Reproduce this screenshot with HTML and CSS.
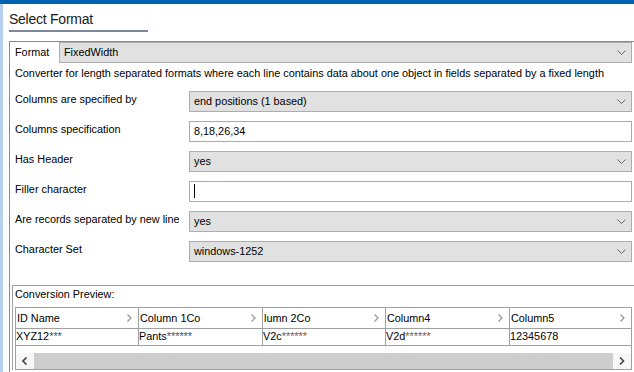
FILE: index.html
```html
<!DOCTYPE html>
<html>
<head>
<meta charset="utf-8">
<link rel="stylesheet" href="styles.css">
</head>
<body>
<div class="topbar"></div>
<div class="shell">
  <div class="strip"></div>
  <div class="content">
    <div class="title-wrap"><div class="title">Select Format</div></div>
    <div class="group">
      <div class="format-row">
        <span class="format-label">Format</span>
        <div class="select format-select"><span class="val">FixedWidth</span><svg class="chev" width="9" height="5" viewBox="0 0 9 5"><polyline points="0.5,0.5 4.5,4.5 8.5,0.5" fill="none" stroke="#666" stroke-width="1"/></svg></div>
      </div>
      <p class="desc">Converter for length separated formats where each line contains data about one object in fields separated by a fixed length</p>
      <div class="rows">
        <div class="row"><span class="label">Columns are specified by</span><div class="select"><span class="val">end positions (1 based)</span><svg class="chev" width="9" height="5" viewBox="0 0 9 5"><polyline points="0.5,0.5 4.5,4.5 8.5,0.5" fill="none" stroke="#666" stroke-width="1"/></svg></div></div>
        <div class="row"><span class="label">Columns specification</span><div class="input"><span class="val">8,18,26,34</span></div></div>
        <div class="row"><span class="label">Has Header</span><div class="select"><span class="val">yes</span><svg class="chev" width="9" height="5" viewBox="0 0 9 5"><polyline points="0.5,0.5 4.5,4.5 8.5,0.5" fill="none" stroke="#666" stroke-width="1"/></svg></div></div>
        <div class="row"><span class="label">Filler character</span><div class="input"><span class="caret"></span></div></div>
        <div class="row"><span class="label">Are records separated by new line</span><div class="select"><span class="val">yes</span><svg class="chev" width="9" height="5" viewBox="0 0 9 5"><polyline points="0.5,0.5 4.5,4.5 8.5,0.5" fill="none" stroke="#666" stroke-width="1"/></svg></div></div>
        <div class="row"><span class="label">Character Set</span><div class="select"><span class="val">windows-1252</span><svg class="chev" width="9" height="5" viewBox="0 0 9 5"><polyline points="0.5,0.5 4.5,4.5 8.5,0.5" fill="none" stroke="#666" stroke-width="1"/></svg></div></div>
      </div>
      <div class="preview">
        <div class="preview-title">Conversion Preview:</div>
        <div class="table">
          <div class="grid">
            <div class="hcell"><span>ID Name</span><svg class="hchev" width="5" height="8" viewBox="0 0 5 8"><polyline points="0.5,0.5 4,4 0.5,7.5" fill="none" stroke="#999" stroke-width="1.3"/></svg></div>
            <div class="hcell"><span>Column 1Co</span><svg class="hchev" width="5" height="8" viewBox="0 0 5 8"><polyline points="0.5,0.5 4,4 0.5,7.5" fill="none" stroke="#999" stroke-width="1.3"/></svg></div>
            <div class="hcell"><span>lumn 2Co</span><svg class="hchev" width="5" height="8" viewBox="0 0 5 8"><polyline points="0.5,0.5 4,4 0.5,7.5" fill="none" stroke="#999" stroke-width="1.3"/></svg></div>
            <div class="hcell"><span>Column4</span><svg class="hchev" width="5" height="8" viewBox="0 0 5 8"><polyline points="0.5,0.5 4,4 0.5,7.5" fill="none" stroke="#999" stroke-width="1.3"/></svg></div>
            <div class="hcell last"><span>Column5</span><svg class="hchev" width="5" height="8" viewBox="0 0 5 8"><polyline points="0.5,0.5 4,4 0.5,7.5" fill="none" stroke="#999" stroke-width="1.3"/></svg></div>
            <div class="dcell">XYZ12<span class="fill">***</span></div>
            <div class="dcell">Pants<span class="fill">******</span></div>
            <div class="dcell">V2c<span class="fill alt">******</span></div>
            <div class="dcell">V2d<span class="fill alt">******</span></div>
            <div class="dcell last">12345678</div>
          </div>
          <div class="spacer"></div>
          <div class="hscroll">
            <div class="arrow"><svg width="6" height="8" viewBox="0 0 6 8"><polyline points="4.5,0.5 1,4 4.5,7.5" fill="none" stroke="#444" stroke-width="1.6"/></svg></div>
            <div class="track"></div>
            <div class="arrow"><svg width="6" height="8" viewBox="0 0 6 8"><polyline points="1,0.5 4.5,4 1,7.5" fill="none" stroke="#444" stroke-width="1.6"/></svg></div>
          </div>
        </div>
      </div>
    </div>
  </div>
</div>
</body>
</html>
```

FILE: styles.css
```css
html, body {
  margin: 0;
  padding: 0;
  background: #ffffff;
  overflow: hidden;
}
body {
  width: 634px;
  height: 372px;
  font-family: "Liberation Sans", Arial, sans-serif;
  font-size: 10.85px;
  color: #000;
}
.topbar {
  height: 4px;
  background: #0063b1;
}
.shell {
  display: flex;
  height: 368px;
}
.strip {
  width: 3px;
  background: #b6d0ec;
  flex: none;
}
.content {
  flex: 1;
  padding-left: 6px;
  min-width: 0;
}
.title-wrap {
  padding-top: 7px;
}
.title {
  width: 139px;
  font-size: 14px;
  letter-spacing: -0.25px;
  line-height: 16px;
  color: #1a1a1a;
  padding-bottom: 3px;
  border-bottom: 2px solid #7b8798;
}
.group {
  margin-top: 9px;
  border-top: 1px solid #8a8a8a;
  border-left: 1px solid #8a8a8a;
  padding-left: 5px;
  padding-right: 2px;
  height: 340px;
}
.format-row {
  display: flex;
  align-items: center;
  height: 21px;
}
.format-label {
  width: 44px;
  flex: none;
  line-height: 13px;
}
.select, .input {
  flex: 1;
  height: 21px;
  box-sizing: border-box;
  display: flex;
  align-items: flex-start;
  padding-left: 4px;
  padding-right: 5px;
  min-width: 0;
}
.select {
  background: #e1e1e1;
  border: 1px solid #adadad;
}
.input {
  background: #fff;
  border: 1px solid #ababab;
}
.val {
  flex: 1;
  line-height: 17px;
  padding-top: 1px;
  white-space: nowrap;
}
.chev {
  margin-top: 7px;
  flex: none;
}
.caret {
  display: block;
  width: 1px;
  height: 14px;
  background: #000;
  margin-top: 2px;
}
.desc {
  margin: 4px 0 0 0;
  line-height: 13px;
  white-space: nowrap;
}
.rows {
  margin-top: 11px;
  display: flex;
  flex-direction: column;
  gap: 9px;
}
.row {
  display: flex;
  align-items: flex-start;
}
.label {
  width: 174px;
  flex: none;
  line-height: 13px;
  padding-top: 2px;
  white-space: nowrap;
}
.preview {
  margin-top: 23px;
  margin-left: -3px;
  margin-right: -2px;
  border-top: 1px solid #a0a0a0;
  border-left: 1px solid #a0a0a0;
  padding-left: 2px;
}
.preview-title {
  line-height: 13px;
  padding-top: 2px;
}
.table {
  margin-top: 6px;
  width: 617px;
  box-sizing: border-box;
  border: 1px solid #a0a0a0;
}
.grid {
  display: grid;
  grid-template-columns: 123px 124px 123px 124px 1fr;
  grid-template-rows: 21px 16px;
  border-bottom: 1px solid #a0a0a0;
}
.hcell, .dcell {
  box-sizing: border-box;
  border-right: 1px solid #a0a0a0;
  white-space: nowrap;
  overflow: hidden;
}
.hcell {
  display: flex;
  align-items: center;
  padding-left: 1px;
  padding-right: 6px;
  border-bottom: 1px solid #a0a0a0;
}
.hcell span {
  flex: 1;
}
.dcell {
  line-height: 15px;
}
.hcell.last, .dcell.last {
  border-right: none;
}
.fill {
  color: #3b4a86;
}
.fill.alt {
  color: #7a5a34;
}
.spacer {
  height: 7px;
}
.hscroll {
  display: flex;
  height: 16px;
}
.arrow {
  width: 18px;
  display: flex;
  align-items: center;
  justify-content: center;
  background: #f7f7f7;
}
.track {
  flex: 1;
  background: #cdcdcd;
}
```
